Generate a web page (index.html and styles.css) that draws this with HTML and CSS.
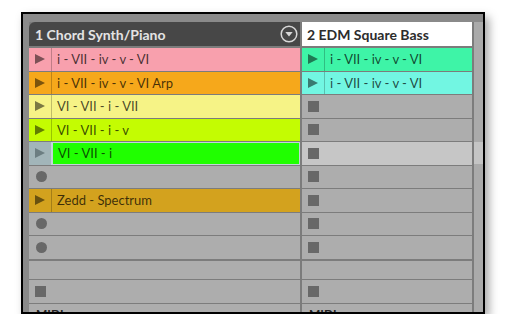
FILE: index.html
```html
<!DOCTYPE html>
<html lang="en">

<head>
    <meta charset="UTF-8" />
    <meta name="viewport" content="width=device-width, initial-scale=1.0" />
    <title>Session View</title>
    <link rel="stylesheet" href="styles.css">
</head>

<body>
    <div class="window">
        <div class="tracks">
            <div class="track">
                <div class="track-head dark">
                    <span>1 Chord Synth/Piano</span>
                    <svg class="fold" width="18" height="18" viewBox="0 0 18 18">
                        <circle cx="9" cy="9" r="7.8" fill="none" stroke="#d8d8d8" stroke-width="1.5" />
                        <path d="M5.3 7 H12.7 L9 11.6 Z" fill="#d8d8d8" />
                    </svg>
                </div>
                <div class="slot clip pink"><span class="launch"><i class="play"></i></span><span class="name">i - VII - iv - v - VI</span></div>
                <div class="slot clip orange"><span class="launch"><i class="play"></i></span><span class="name">i - VII - iv - v - VI Arp</span></div>
                <div class="slot clip yellow"><span class="launch"><i class="play"></i></span><span class="name">VI - VII - i - VII</span></div>
                <div class="slot clip lime"><span class="launch"><i class="play"></i></span><span class="name">VI - VII - i - v</span></div>
                <div class="slot clip green selected"><span class="launch"><i class="play"></i></span><span class="name">VI - VII - i</span></div>
                <div class="slot empty"><i class="rec"></i></div>
                <div class="slot clip gold"><span class="launch"><i class="play"></i></span><span class="name">Zedd - Spectrum</span></div>
                <div class="slot empty"><i class="rec"></i></div>
                <div class="slot empty"><i class="rec"></i></div>
                <div class="slot empty short"></div>
                <div class="slot empty"><i class="stop"></i></div>
                <div class="slot io">MIDI</div>
            </div>

            <div class="track narrow">
                <div class="track-head light">
                    <span>2 EDM Square Bass</span>
                </div>
                <div class="slot clip mint"><span class="launch"><i class="play"></i></span><span class="name">i - VII - iv - v - VI</span></div>
                <div class="slot clip aqua"><span class="launch"><i class="play"></i></span><span class="name">i - VII - iv - v - VI</span></div>
                <div class="slot empty"><i class="stop"></i></div>
                <div class="slot empty"><i class="stop"></i></div>
                <div class="slot empty scene-on"><i class="stop"></i></div>
                <div class="slot empty"><i class="stop"></i></div>
                <div class="slot empty"><i class="stop"></i></div>
                <div class="slot empty"><i class="stop"></i></div>
                <div class="slot empty"><i class="stop"></i></div>
                <div class="slot empty short"></div>
                <div class="slot empty"><i class="stop"></i></div>
                <div class="slot io">MIDI</div>
            </div>
        </div>

        <div class="scroll">
            <div class="scroll-mark"></div>
        </div>
    </div>
</body>

</html>
```

FILE: styles.css
```css
body {
    margin: 0;
    background: #ffffff;
    font-family: 'Lato', 'Open Sans', sans-serif;
}

.window {
    margin: 12px 0 0 21px;
    width: 460px;
    height: 290px;
    border: 2px solid #000;
    background-color: #8a8a8a;
    box-shadow: 4px 5px 9px rgba(0, 0, 0, 0.35);
    display: flex;
    padding-top: 8px;
    box-sizing: content-box;
    overflow: hidden;
}

.tracks {
    display: flex;
    gap: 2px;
    margin-left: 6px;
    padding-right: 2px;
    background-color: #7c7c7c;
    align-items: flex-start;
}

.track {
    width: 271px;
    display: flex;
    flex-direction: column;
    gap: 1px;
}

.track.narrow {
    width: 170px;
}

.track-head {
    height: 24px;
    margin-bottom: 1px;
    display: flex;
    align-items: center;
    justify-content: space-between;
    font-size: 14px;
    font-weight: bold;
    padding: 0 2px 0 6px;
}

.track-head.dark {
    background-color: #474747;
    color: #e4e4e4;
    border-top-left-radius: 6px;
}

.track-head.light {
    background-color: #ffffff;
    color: #2c2c2c;
    padding-left: 5px;
}

.fold {
    display: block;
}

.slot {
    height: 22.5px;
    flex-shrink: 0;
    display: flex;
    align-items: center;
    background-color: #adadad;
    font-size: 13px;
    box-sizing: border-box;
}

.slot.short {
    height: 18.5px;
    margin-top: 1px;
}

.clip {
    color: rgba(0, 0, 0, 0.72);
}

.launch {
    width: 22px;
    height: 100%;
    display: flex;
    align-items: center;
    justify-content: center;
    border-right: 1px solid rgba(0, 0, 0, 0.22);
    flex-shrink: 0;
}

.play {
    width: 0;
    height: 0;
    border-left: 10px solid rgba(0, 0, 0, 0.5);
    border-top: 5.5px solid transparent;
    border-bottom: 5.5px solid transparent;
}

.name {
    padding-left: 5px;
    white-space: nowrap;
}

.rec {
    width: 11px;
    height: 11px;
    border-radius: 50%;
    background-color: #686868;
    margin-left: 7px;
}

.stop {
    width: 11px;
    height: 11px;
    background-color: #686868;
    margin-left: 6px;
}

.pink { background-color: #f8a0ad; }
.orange { background-color: #f6a81b; }
.yellow { background-color: #f6f386; }
.lime { background-color: #c4fc02; }
.gold { background-color: #d3a21e; }
.mint { background-color: #3ef4a7; }
.aqua { background-color: #72f6e2; }

.green {
    background-color: #20ff00;
    box-shadow: inset 0 0 0 1px #c3d5d9;
}

.green .launch {
    background-color: #a2b5b9;
    border-right: 2px solid #c3d5d9;
}

.green .play {
    border-left-color: #6c7e82;
}

.scene-on {
    background-color: #c6c6c6;
}

.io {
    height: 30px;
    align-items: flex-start;
    padding: 2px 0 0 7px;
    font-size: 12px;
    font-weight: bold;
    color: #222;
}

.scroll {
    flex: 1;
    background-color: #aaaaaa;
}

.scroll-mark {
    margin-top: 120px;
    height: 22px;
    background-color: #c4c4c4;
}
```
